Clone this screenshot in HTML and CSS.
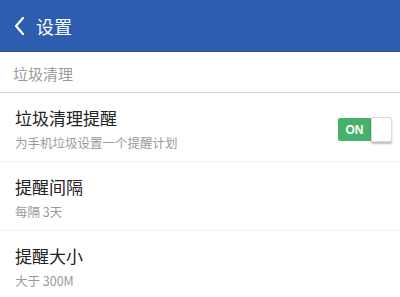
FILE: index.html
```html
<!DOCTYPE html>
<html lang="zh">
<head>
<meta charset="utf-8">
<link rel="stylesheet" href="styles.css">
</head>
<body>
<header class="topbar">
  <svg class="back" width="12" height="20" viewBox="0 0 12 20"><polyline points="9,2 2,10 9,18" fill="none" stroke="#fff" stroke-width="2.2" stroke-linecap="round" stroke-linejoin="round"/></svg>
  <span class="title">设置</span>
</header>
<div class="section">垃圾清理</div>
<div class="row">
  <div class="texts">
    <div class="main">垃圾清理提醒</div>
    <div class="sub">为手机垃圾设置一个提醒计划</div>
  </div>
  <div class="toggle"><span class="on">ON</span><span class="thumb"></span></div>
</div>
<div class="row">
  <div class="texts">
    <div class="main">提醒间隔</div>
    <div class="sub">每隔 3天</div>
  </div>
</div>
<div class="row last">
  <div class="texts">
    <div class="main">提醒大小</div>
    <div class="sub">大于 300M</div>
  </div>
</div>
</body>
</html>
```
FILE: styles.css
```css
html, body {
  margin: 0;
  padding: 0;
  background: #fff;
  width: 400px;
  height: 297px;
  overflow: hidden;
  font-family: "Noto Sans CJK SC", "Noto Sans", "Liberation Sans", sans-serif;
}
.topbar {
  height: 52px;
  background: #2c5dae;
  border-bottom: 1px solid #244f96;
  display: flex;
  align-items: center;
  padding-left: 14px;
  box-sizing: border-box;
}
.back {
  margin-right: 10px;
}
.title {
  color: #fff;
  font-size: 18px;
  line-height: 22px;
}
.section {
  height: 41px;
  box-sizing: border-box;
  border-bottom: 1px solid #d4d4d4;
  padding-left: 13px;
  display: flex;
  align-items: center;
  color: #9a9a9a;
  font-size: 15px;
  padding-top: 2px;
}
.row {
  display: flex;
  align-items: center;
  justify-content: space-between;
  padding: 15px 8px 10px 15px;
  border-bottom: 1px solid #efefef;
}
.row.last {
  border-bottom: none;
}
.texts {
  display: flex;
  flex-direction: column;
  gap: 7px;
}
.main {
  font-size: 17px;
  line-height: 20px;
  color: #222;
}
.sub {
  font-size: 12.5px;
  line-height: 16px;
  color: #9a9a9a;
}
.toggle {
  display: flex;
  align-items: center;
}
.on {
  width: 33px;
  height: 23px;
  background: #47b06b;
  color: #fff;
  font-family: "Liberation Sans", sans-serif;
  font-weight: bold;
  font-size: 12px;
  display: flex;
  align-items: center;
  justify-content: center;
  border-radius: 2px 0 0 2px;
}
.thumb {
  width: 21px;
  height: 25px;
  background: #fff;
  border: 1px solid #dcdcdc;
  box-sizing: border-box;
  border-radius: 2px;
  box-shadow: 0 2px 2px rgba(0,0,0,0.25);
}
```
